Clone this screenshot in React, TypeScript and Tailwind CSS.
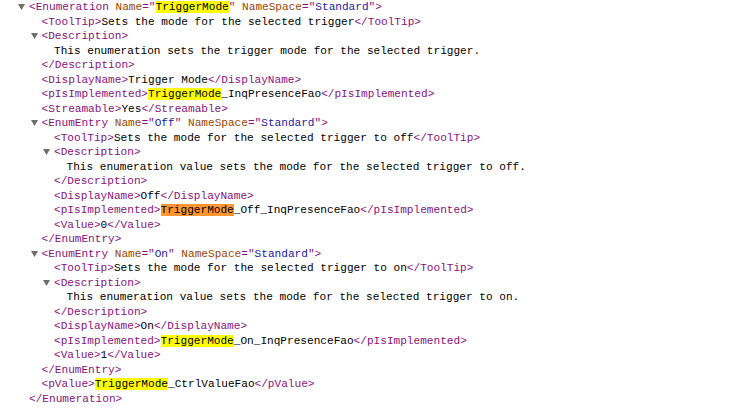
import React from "react";

type Seg = { t: string; c: "tag" | "an" | "av" | "tx" | "hl" | "hlo" };

const cls: Record<Seg["c"], string> = {
  tag: "text-[#881280]",
  an: "text-[#994500]",
  av: "text-[#1a1aa6]",
  tx: "text-black",
  hl: "text-black bg-[#ffff00]",
  hlo: "text-black bg-[#ff9632]",
};

const pad = ["pl-[18px]", "pl-[30.5px]", "pl-[43px]", "pl-[55.5px]"];

const tg = (t: string): Seg => ({ t, c: "tag" });
const an = (t: string): Seg => ({ t, c: "an" });
const av = (t: string): Seg => ({ t, c: "av" });
const tx = (t: string): Seg => ({ t, c: "tx" });
const hl = (t: string): Seg => ({ t, c: "hl" });
const hlo = (t: string): Seg => ({ t, c: "hlo" });

type Line = { l: number; tog?: boolean; s: Seg[] };

const lines: Line[] = [
  { l: 0, tog: true, s: [tg("<Enumeration "), an("Name"), tg('="'), hl("TriggerMode"), tg('" '), an("NameSpace"), tg('="'), av("Standard"), tg('">')] },
  { l: 1, s: [tg("<ToolTip>"), tx("Sets the mode for the selected trigger"), tg("</ToolTip>")] },
  { l: 1, tog: true, s: [tg("<Description>")] },
  { l: 2, s: [tx("This enumeration sets the trigger mode for the selected trigger.")] },
  { l: 1, s: [tg("</Description>")] },
  { l: 1, s: [tg("<DisplayName>"), tx("Trigger Mode"), tg("</DisplayName>")] },
  { l: 1, s: [tg("<pIsImplemented>"), hl("TriggerMode"), tx("_InqPresenceFao"), tg("</pIsImplemented>")] },
  { l: 1, s: [tg("<Streamable>"), tx("Yes"), tg("</Streamable>")] },
  { l: 1, tog: true, s: [tg("<EnumEntry "), an("Name"), tg('="'), av("Off"), tg('" '), an("NameSpace"), tg('="'), av("Standard"), tg('">')] },
  { l: 2, s: [tg("<ToolTip>"), tx("Sets the mode for the selected trigger to off"), tg("</ToolTip>")] },
  { l: 2, tog: true, s: [tg("<Description>")] },
  { l: 3, s: [tx("This enumeration value sets the mode for the selected trigger to off.")] },
  { l: 2, s: [tg("</Description>")] },
  { l: 2, s: [tg("<DisplayName>"), tx("Off"), tg("</DisplayName>")] },
  { l: 2, s: [tg("<pIsImplemented>"), hlo("TriggerMode"), tx("_Off_InqPresenceFao"), tg("</pIsImplemented>")] },
  { l: 2, s: [tg("<Value>"), tx("0"), tg("</Value>")] },
  { l: 1, s: [tg("</EnumEntry>")] },
  { l: 1, tog: true, s: [tg("<EnumEntry "), an("Name"), tg('="'), av("On"), tg('" '), an("NameSpace"), tg('="'), av("Standard"), tg('">')] },
  { l: 2, s: [tg("<ToolTip>"), tx("Sets the mode for the selected trigger to on"), tg("</ToolTip>")] },
  { l: 2, tog: true, s: [tg("<Description>")] },
  { l: 3, s: [tx("This enumeration value sets the mode for the selected trigger to on.")] },
  { l: 2, s: [tg("</Description>")] },
  { l: 2, s: [tg("<DisplayName>"), tx("On"), tg("</DisplayName>")] },
  { l: 2, s: [tg("<pIsImplemented>"), hl("TriggerMode"), tx("_On_InqPresenceFao"), tg("</pIsImplemented>")] },
  { l: 2, s: [tg("<Value>"), tx("1"), tg("</Value>")] },
  { l: 1, s: [tg("</EnumEntry>")] },
  { l: 1, s: [tg("<pValue>"), hl("TriggerMode"), tx("_CtrlValueFao"), tg("</pValue>")] },
  { l: 0, s: [tg("</Enumeration>")] },
];

function Toggle() {
  return (
    <svg width="7" height="6" viewBox="0 0 7 6" className="block">
      <polygon points="0,0 7,0 3.5,6" fill="#6e6e6e" />
    </svg>
  );
}

export default function App() {
  return (
    <div className="w-[742px] h-[408px] bg-white overflow-hidden pt-[0px]">
      <div className="font-['Liberation_Mono',monospace] text-[11.1px] leading-[14.52px] whitespace-pre">
        {lines.map((ln, i) => (
          <div key={i} className={`flex items-center h-[14.52px] ${pad[ln.l]}`}>
            <span className="w-[11px] flex items-center">{ln.tog ? <Toggle /> : null}</span>
            <span>
              {ln.s.map((s, j) => (
                <span key={j} className={cls[s.c]}>
                  {s.t}
                </span>
              ))}
            </span>
          </div>
        ))}
      </div>
    </div>
  );
}
